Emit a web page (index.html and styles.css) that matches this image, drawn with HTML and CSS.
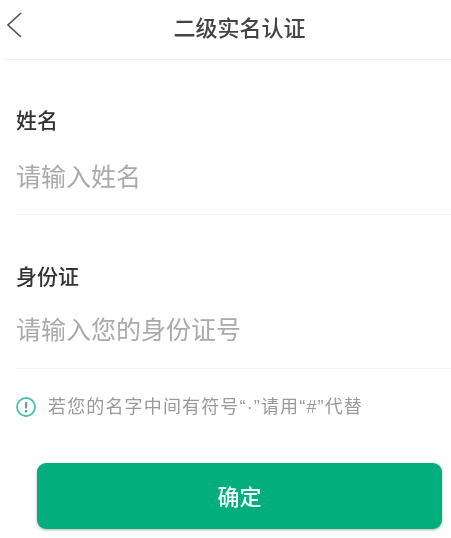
FILE: index.html
```html
<!DOCTYPE html>
<html lang="zh-CN">
<head>
<meta charset="utf-8">
<title>二级实名认证</title>
<link rel="stylesheet" href="styles.css">
</head>
<body>
<div class="page">
  <header class="nav">
    <svg class="back" width="18" height="26" viewBox="0 0 18 26" aria-hidden="true"><path d="M16 1 L3 13 L16 25" fill="none" stroke="#555" stroke-width="1.7"/></svg>
    <h1 class="title">二级实名认证</h1>
  </header>
  <section class="field first">
    <div class="label">姓名</div>
    <div class="placeholder">请输入姓名</div>
  </section>
  <section class="field second">
    <div class="label">身份证</div>
    <div class="placeholder">请输入您的身份证号</div>
  </section>
  <div class="tip">
    <svg class="tip-icon" width="22" height="22" viewBox="0 0 22 22" aria-hidden="true"><circle cx="11" cy="11" r="9" fill="none" stroke="#4dbfa5" stroke-width="1.8"/><path d="M11 6 V12.5" stroke="#4a9f8c" stroke-width="1.8"/><circle cx="11" cy="15.2" r="1.2" fill="#4a9f8c"/></svg>
    <span class="tip-text">若您的名字中间有符号“·”请用“#”代替</span>
  </div>
  <button class="submit" type="button">确定</button>
</div>
</body>
</html>
```
FILE: styles.css
```css
* { box-sizing: border-box; }
html, body { margin: 0; padding: 0; background: #fff; }
body { font-family: "Noto Sans CJK SC", "Liberation Sans", sans-serif; }
.page { width: 451px; height: 538px; overflow: hidden; filter: blur(0.45px); }
.nav {
  position: relative;
  height: 60px;
  margin-left: 5px;
  border-bottom: 1px solid #f1f1f1;
  display: flex;
  align-items: center;
  justify-content: center;
  padding: 0 0 7px 23px;
}
.back { position: absolute; left: 0; top: 12px; }
.title { margin: 0; font-size: 22px; font-weight: 500; color: #444; line-height: 30px; }
.field { margin-left: 16px; border-bottom: 1px solid #f4f4f4; }
.field.first { height: 155px; padding-top: 44px; }
.field.second { height: 154px; padding-top: 45px; }
.label { font-size: 21px; font-weight: 500; line-height: 30px; color: #333; }
.placeholder { font-size: 25px; line-height: 36px; color: #aaa; }
.first .placeholder { margin-top: 23px; }
.second .placeholder { margin-top: 20px; }
.tip { display: flex; align-items: center; gap: 11px; margin: 27px 0 0 15px; height: 22px; }
.tip-text { font-family: "Liberation Sans", "Noto Sans CJK SC", sans-serif; font-size: 18px; letter-spacing: 1.15px; line-height: 22px; color: #9a9a9a; }
.submit {
  display: block;
  width: 405px;
  height: 66px;
  margin: 45px 0 0 37px;
  border: 0;
  border-radius: 9px;
  background: #02ae7c;
  box-shadow: 0 1px 3px rgba(0,0,0,.3);
  color: #f2fbf7;
  font: 500 22px/30px "Noto Sans CJK SC", sans-serif;
  padding: 0 0 2px;
}
```
